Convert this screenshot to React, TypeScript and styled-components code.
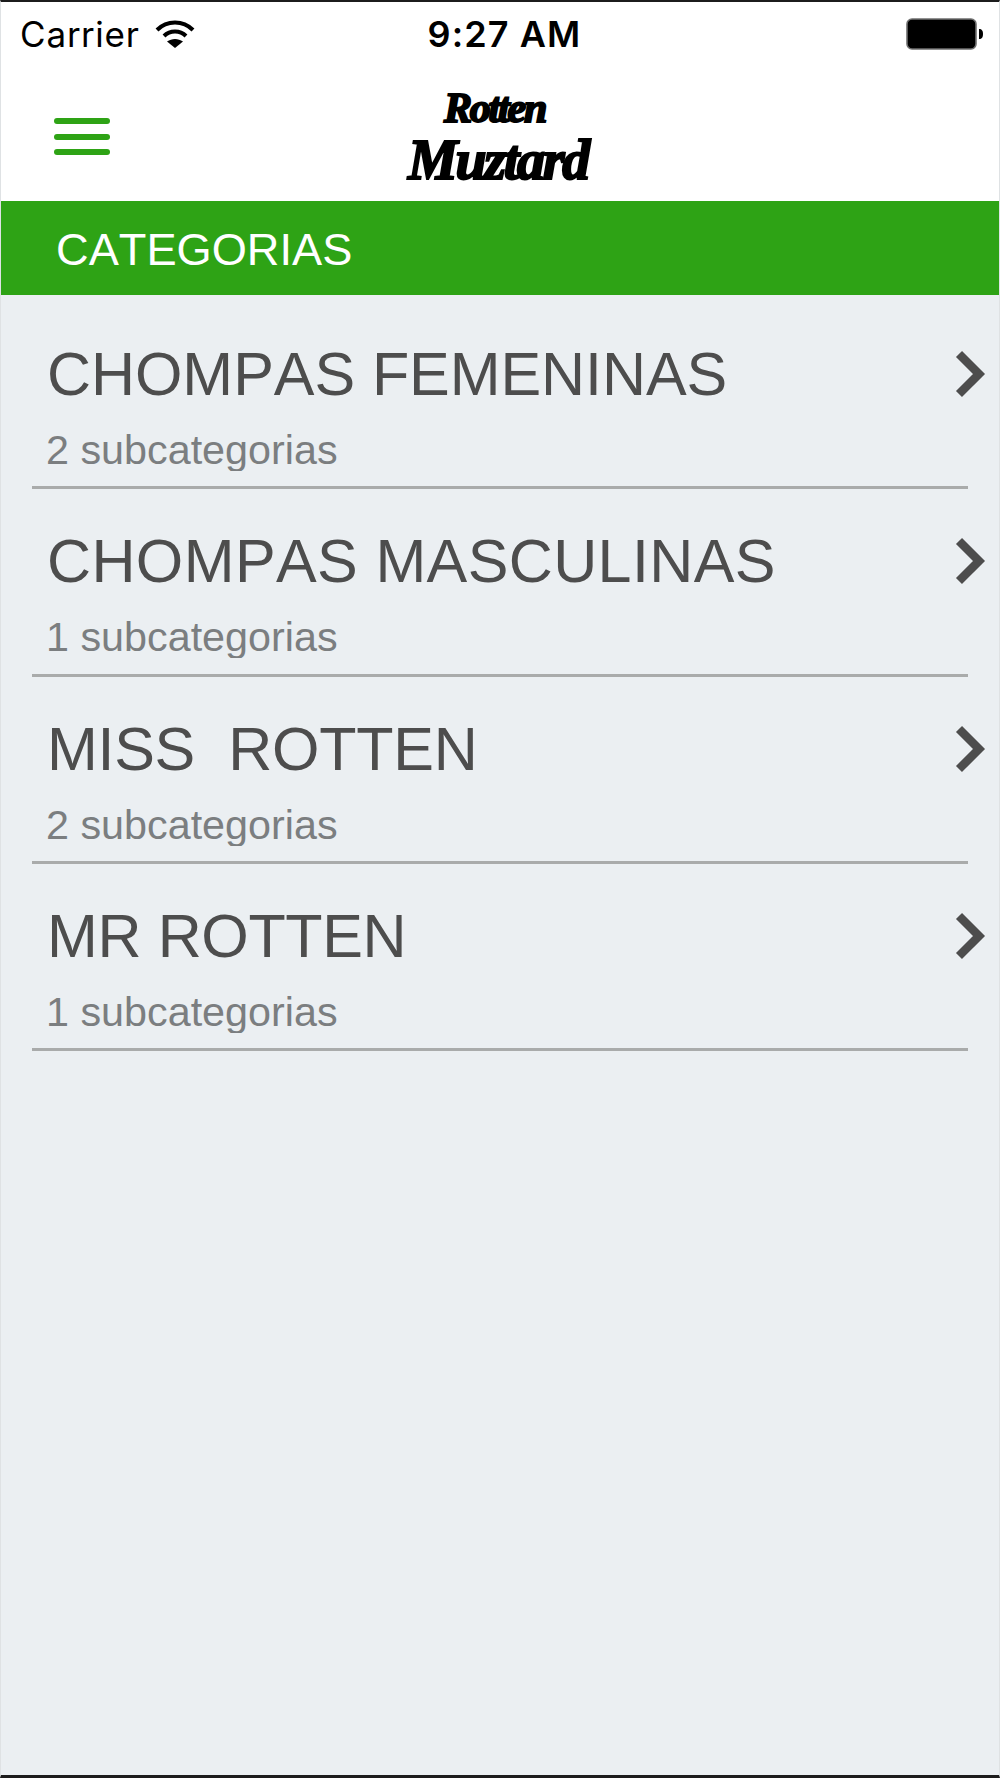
import React from 'react'
import styled, { createGlobalStyle } from 'styled-components'

const CATEGORIES = [
  { name: 'CHOMPAS FEMENINAS', count: 2, tracking: -0.06 },
  { name: 'CHOMPAS MASCULINAS', count: 1, tracking: 0.38 },
  { name: 'MISS  ROTTEN', count: 2, tracking: -0.28 },
  { name: 'MR ROTTEN', count: 1, tracking: -0.38 },
]

const GlobalStyle = createGlobalStyle`
  html, body {
    margin: 0;
    padding: 0;
    background: #ebeff2;
  }
  * {
    box-sizing: border-box;
  }
`

const Screen = styled.div`
  width: 1000px;
  height: 1778px;
  display: flex;
  flex-direction: column;
  overflow: hidden;
  background: #ebeff2;
  border-top: 2px solid #1c1c1c;
  border-bottom: 3px solid #1c1c1c;
  border-left: 1px solid #dfe2e4;
  border-right: 1px solid #dfe2e4;
  font-family: 'Liberation Sans', Arial, sans-serif;
  font-kerning: none;
`

const StatusBar = styled.div`
  height: 64px;
  flex: none;
  display: grid;
  grid-template-columns: 1fr auto 1fr;
  align-items: center;
  padding: 0 15px 0 19px;
  background: #fff;
  color: #000;
  font-family: Inter, 'Liberation Sans', sans-serif;
`

const StatusLeft = styled.div`
  display: flex;
  align-items: center;
  gap: 15px;
`

const Carrier = styled.span`
  font-size: 35px;
  letter-spacing: 0.9px;
`

const Clock = styled.span`
  font-size: 36px;
  font-weight: 600;
  letter-spacing: 1.1px;
  margin-left: 5px;
`

const StatusRight = styled.div`
  display: flex;
  justify-content: flex-end;
`

const Header = styled.header`
  height: 135px;
  flex: none;
  display: flex;
  align-items: center;
  position: relative;
  padding: 6px 0 0 53px;
  background: #fff;
`

const MenuButton = styled.div`
  width: 56px;
  display: flex;
  flex-direction: column;
  gap: 9.5px;
`

const MenuBar = styled.span`
  display: block;
  height: 6px;
  border-radius: 3px;
  background: #2ea315;
`

const Logo = styled.div`
  position: absolute;
  left: 407px;
  top: 18px;
  width: 190px;
  color: #000;
  font-family: 'Liberation Serif', serif;
  font-style: italic;
  font-weight: 700;
  -webkit-text-stroke: 2px #000;
`

const LogoTop = styled.div`
  font-size: 42px;
  line-height: 48px;
  margin-left: 36px;
  letter-spacing: -2.2px;
`

const LogoBottom = styled.div`
  font-size: 56px;
  line-height: 60px;
  margin-top: -2px;
  letter-spacing: -2.3px;
`

const TitleBar = styled.div`
  height: 94px;
  flex: none;
  display: flex;
  align-items: center;
  padding: 4px 0 0 55px;
  background: #2ea315;
  color: #fff;
  font-size: 45.2px;
`

const List = styled.div`
  display: flex;
  flex-direction: column;
  padding: 7px 31px 0;
`

const Row = styled.div`
  height: 187.33px;
  display: grid;
  grid-template-columns: 1fr auto;
  grid-template-rows: 107px 62px;
  padding-left: 15px;
  border-bottom: 3px solid #a9abab;
`

const Name = styled.div<{ $tracking: number }>`
  align-self: end;
  font-size: 61px;
  line-height: 70px;
  letter-spacing: ${(p) => p.$tracking}px;
  color: #4d4d4d;
  white-space: pre;
`

const Count = styled.div`
  grid-column: 1 / 3;
  margin-left: -1px;
  overflow: hidden;
  font-size: 41.3px;
  line-height: 83px;
  color: #7b7e80;
`

const Chevron = styled.svg`
  width: 36px;
  height: 50px;
  margin: 47px -21px 0 0;
`

const WifiIcon = () => (
  <svg width="40" height="30" viewBox="0 0 40 30" fill="none" stroke="#000" strokeWidth="4">
    <path d="M2 11 C12 1 28 1 38 11" />
    <path d="M9 17 C15 11 25 11 31 17" />
    <path d="M20 29 L12 22.5 C17 19 23 19 28 22.5 Z" fill="#000" stroke="none" />
  </svg>
)

const BatteryIcon = () => (
  <svg width="78" height="32" viewBox="0 0 78 32">
    <rect x="1" y="1" width="69" height="30" rx="5" fill="#000" stroke="#6f6f6f" strokeWidth="1.6" />
    <path d="M73 11 C76 11 77 13 77 16 C77 19 76 21 73 21 Z" fill="#000" />
  </svg>
)

const ChevronIcon = () => (
  <Chevron viewBox="0 0 36 50" fill="none" stroke="#4d4d4d" strokeWidth="8.5">
    <path d="M6 5 L26 25 L6 45" />
  </Chevron>
)

export default function App() {
  return (
    <Screen>
      <GlobalStyle />
      <StatusBar>
        <StatusLeft>
          <Carrier>Carrier</Carrier>
          <WifiIcon />
        </StatusLeft>
        <Clock>9:27 AM</Clock>
        <StatusRight>
          <BatteryIcon />
        </StatusRight>
      </StatusBar>
      <Header>
        <MenuButton>
          <MenuBar />
          <MenuBar />
          <MenuBar />
        </MenuButton>
        <Logo>
          <LogoTop>Rotten</LogoTop>
          <LogoBottom>Muztard</LogoBottom>
        </Logo>
      </Header>
      <TitleBar>CATEGORIAS</TitleBar>
      <List>
        {CATEGORIES.map((category) => (
          <Row key={category.name}>
            <Name $tracking={category.tracking}>{category.name}</Name>
            <ChevronIcon />
            <Count>{category.count} subcategorias</Count>
          </Row>
        ))}
      </List>
    </Screen>
  )
}
